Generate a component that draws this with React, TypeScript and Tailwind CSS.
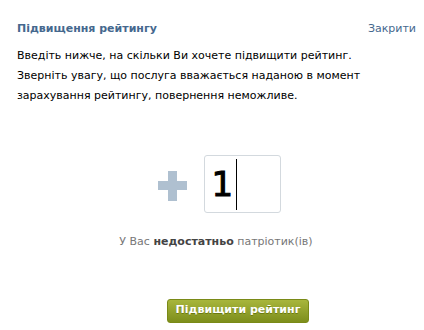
import React from "react";

export default function App() {
    return (
        <div
            className="w-[424px] h-[330px] bg-white flex flex-col"
            style={{ fontFamily: '"DejaVu Sans", "Noto Sans", sans-serif' }}
        >
            {/* Header */}
            <div className="flex justify-between items-center pl-[17px] pr-[8px] pt-[21px] h-[36px]">
                <h1 className="text-[11px] font-bold text-[#45688e] leading-none">Підвищення рейтингу</h1>
                <a className="text-[11px] text-[#45688e] leading-none cursor-pointer">Закрити</a>
            </div>

            {/* Description */}
            <p className="pl-[17px] pr-[10px] mt-[10px] text-[11px] leading-[20px] text-black">
                Введіть нижче, на скільки Ви хочете підвищити рейтинг.
                <br />
                Зверніть увагу, що послуга вважається наданою в момент
                <br />
                зарахування рейтингу, повернення неможливе.
            </p>

            {/* Amount input */}
            <div className="flex items-center justify-center mt-[49px] pl-[14px]">
                <span className="relative w-[29px] h-[30px] mr-[17px] mt-[4px]">
                    <span className="absolute left-0 top-[10px] w-[29px] h-[9px] bg-[#afc0d0]" />
                    <span className="absolute left-[10px] top-0 w-[9px] h-[30px] bg-[#afc0d0]" />
                </span>
                <div className="w-[77px] h-[58px] border border-[#d3d9de] rounded-[3px] flex items-center pl-[7px]">
                    <span className="text-[34px] leading-none text-black [-webkit-text-stroke:1px_black]">1</span>
                    <span className="w-px h-[51px] bg-black ml-[3px]" />
                </div>
            </div>

            {/* Status */}
            <div className="text-center mt-[21px] pl-[8px] text-[11px] text-[#777777]">
                У Вас <b className="text-[#444444]">недостатньо</b> патріотик(ів)
            </div>

            {/* Button */}
            <div className="flex justify-center mt-[48px] pl-[52px]">
                <button
                    className="w-[142px] h-[24px] rounded-[3px] border border-[#7a8a17] bg-gradient-to-b from-[#a8b63c] to-[#7d8e1b] text-white text-[11px] font-bold"
                    style={{ textShadow: "0 1px 0 #6a7a10" }}
                >
                    Підвищити рейтинг
                </button>
            </div>
        </div>
    );
}
